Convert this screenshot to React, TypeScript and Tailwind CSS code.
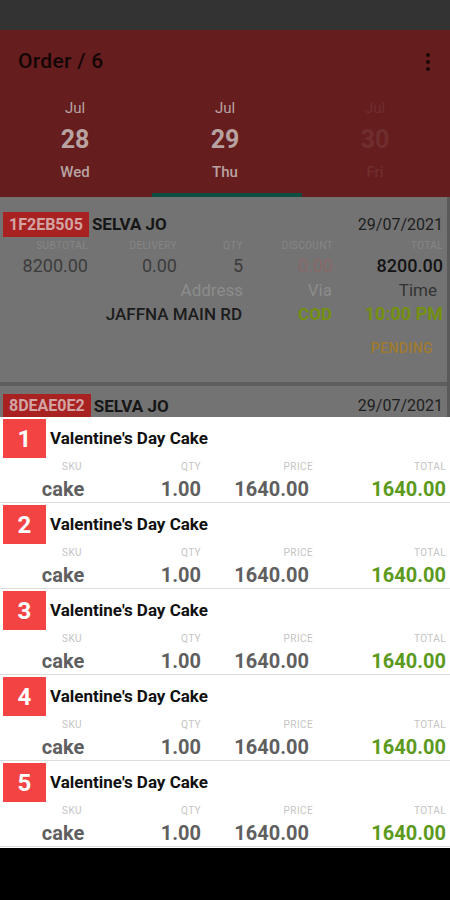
import { Fragment } from 'react';

const FONT = { fontFamily: 'Roboto, "Noto Sans", sans-serif' };

const DAYS = [
  { mon: 'Jul', day: '28', dow: 'Wed', dim: false },
  { mon: 'Jul', day: '29', dow: 'Thu', dim: false },
  { mon: 'Jul', day: '30', dow: 'Fri', dim: true },
];

const ITEMS = [1, 2, 3, 4, 5];

export default function App() {
  return (
    <div className="w-[450px] h-[900px] flex flex-col overflow-hidden bg-black" style={FONT}>
      {/* status bar */}
      <div className="h-[30px] bg-[#333333] shrink-0" />

      <div className="relative flex-1 flex flex-col bg-[#737373]">
        {/* header (dimmed) */}
        <div className="bg-[#661d1d] shrink-0">
          <div className="h-[64px] flex items-center justify-between pl-[18px] pr-[20px]">
            <span className="text-[21px] font-medium tracking-[0.3px] text-[#120606]">Order / 6</span>
            <span className="flex flex-col gap-[3px]">
              <span className="w-[4px] h-[4px] rounded-full bg-[#1a0808]" />
              <span className="w-[4px] h-[4px] rounded-full bg-[#1a0808]" />
              <span className="w-[4px] h-[4px] rounded-full bg-[#1a0808]" />
            </span>
          </div>
          <div className="grid grid-cols-3">
            {DAYS.map((d, i) => (
              <div key={d.day} className="flex flex-col items-center">
                <div
                  className={`flex flex-col items-center pt-[5px] ${d.dim ? 'text-[#6f2e2e]' : 'text-[#b8a3a3]'}`}
                >
                  <span className="text-[15px] leading-[18px]">{d.mon}</span>
                  <span className="text-[25px] font-bold leading-[32px] mt-[7px]">{d.day}</span>
                  <span className="text-[15px] font-medium leading-[18px] mt-[7px]">{d.dow}</span>
                </div>
                <div className={`mt-[12px] h-[4px] w-full ${i === 1 ? 'bg-[#0d4d42] ml-[3px]' : ''}`} />
              </div>
            ))}
          </div>
        </div>

        {/* order cards (dimmed) */}
        <div className="flex-1 flex flex-col gap-[4px] bg-[#5e5e5e] border-r-[3px] border-[#5a5a5a]">
          <div className="bg-[#737373] pt-[15px] pb-[25px]">
            <OrderHead id="1F2EB505" />
            <div className="grid grid-cols-[88px_89px_66px_90px_110px] mt-[2px]">
              {[
                ['SUBTOTAL', '8200.00', 'text-[#3c3c3c]'],
                ['DELIVERY', '0.00', 'text-[#3c3c3c]'],
                ['QTY', '5', 'text-[#3c3c3c]'],
                ['DISCOUNT', '0.00', 'text-[#8a6868]'],
                ['TOTAL', '8200.00', 'text-[#141414] font-medium'],
              ].map(([label, value, cls]) => (
                <div key={label} className="flex flex-col items-end">
                  <span className="text-[10px] leading-[12px] tracking-[0.4px] text-[#868686]">{label}</span>
                  <span className={`text-[18px] leading-[22px] mt-[3px] ${cls}`}>{value}</span>
                </div>
              ))}
            </div>
            <div className="grid grid-cols-[243px_89px_111px] mt-[1px]">
              <div className="flex flex-col items-end">
                <span className="text-[17px] leading-[24px] text-[#8c8c8c]">Address</span>
                <span className="text-[17px] leading-[24px] font-medium text-[#1c1c1c] mr-[1px]">JAFFNA MAIN RD</span>
              </div>
              <div className="flex flex-col items-end">
                <span className="text-[17px] leading-[24px] text-[#8c8c8c]">Via</span>
                <span className="text-[17px] leading-[24px] font-bold text-[#74900f]">COD</span>
              </div>
              <div className="flex flex-col items-end">
                <span className="text-[17px] leading-[24px] text-[#333333] mr-[6px]">Time</span>
                <span className="text-[18px] leading-[24px] font-bold text-[#74900f]">10:00 PM</span>
              </div>
            </div>
            <div className="flex justify-end pr-[14px] mt-[13px]">
              <span className="text-[14px] leading-[18px] font-medium text-[#a07a2c] tracking-[0.4px]">PENDING</span>
            </div>
          </div>
          <div className="bg-[#737373] pt-[8px] flex-1">
            <OrderHead id="8DEAE0E2" />
          </div>
        </div>

        {/* bottom sheet with line items */}
        <div className="absolute left-0 right-0 bottom-0 h-[431px] bg-white flex flex-col">
          {ITEMS.map((n) => (
            <Fragment key={n}>
              <div className="h-[85px] flex flex-col">
                <div className="flex items-center pt-[2px]">
                  <div className="ml-[3px] w-[43px] h-[39px] bg-[#f44343] flex items-center justify-center text-white text-[24px] font-bold">
                    {n}
                  </div>
                  <span className="ml-[4px] text-[17px] font-bold text-[#111111]">Valentine's Day Cake</span>
                </div>
                <div className="grid grid-cols-[126px_75px_112px_133px] mt-[3px]">
                  <div className="flex flex-col items-center">
                    <span className="text-[10px] leading-[12px] tracking-[0.4px] text-[#c4c4c4] ml-[18px]">SKU</span>
                    <span className="text-[20px] leading-[24px] mt-[4px] font-bold text-[#5f5f5f]">cake</span>
                  </div>
                  <div className="flex flex-col items-end">
                    <span className="text-[10px] leading-[12px] tracking-[0.4px] text-[#c4c4c4]">QTY</span>
                    <span className="text-[20px] leading-[24px] mt-[4px] font-bold text-[#5f5f5f]">1.00</span>
                  </div>
                  <div className="flex flex-col items-end">
                    <span className="text-[10px] leading-[12px] tracking-[0.4px] text-[#c4c4c4]">PRICE</span>
                    <span className="text-[20px] leading-[24px] mt-[4px] font-bold text-[#5f5f5f] mr-[4px]">1640.00</span>
                  </div>
                  <div className="flex flex-col items-end">
                    <span className="text-[10px] leading-[12px] tracking-[0.4px] text-[#c4c4c4]">TOTAL</span>
                    <span className="text-[20px] leading-[24px] mt-[4px] font-bold text-[#5c9a1e]">1640.00</span>
                  </div>
                </div>
              </div>
              <div className="h-[1px] bg-[#dddddd] shrink-0" />
            </Fragment>
          ))}
        </div>
      </div>

      {/* nav bar */}
      <div className="h-[52px] bg-black shrink-0" />
    </div>
  );
}

function OrderHead({ id }: { id: string }) {
  return (
    <div className="flex items-center pl-[3px] pr-[4px]">
      <span className="h-[25px] px-[6px] bg-[#a82222] text-[#d3a4a4] text-[16px] font-bold flex items-center">{id}</span>
      <span className="ml-[3px] text-[17px] font-bold text-[#161616]">SELVA JO</span>
      <span className="ml-auto text-[16px] text-[#1e1e1e]">29/07/2021</span>
    </div>
  );
}
